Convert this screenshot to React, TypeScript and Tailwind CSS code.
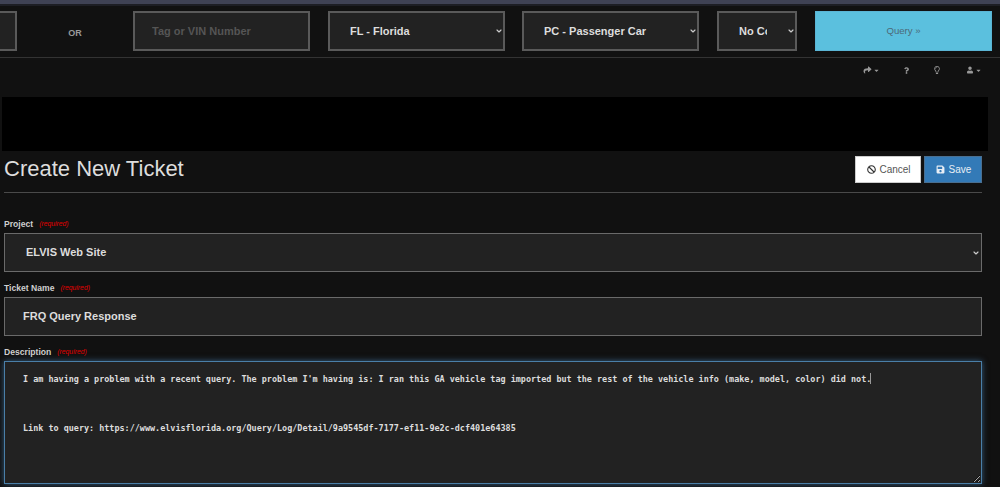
import React from "react";
import { FaShare, FaQuestion, FaRegLightbulb, FaUser, FaCaretDown, FaBan, FaSave } from "react-icons/fa";
import { LuChevronDown } from "react-icons/lu";

const sans = "[font-family:'Liberation_Sans',Arial,sans-serif]";
const fieldClasses =
  "h-10 bg-[#222222] border-2 border-[#5a5a5a] text-[#dddddd] text-[11px] font-bold outline-none [font-family:'Liberation_Sans',Arial,sans-serif]";

function Select({ value, className, pr = "pr-[6px]", pl = "pl-[20px]", tall = false }: { value: string; className: string; pr?: string; pl?: string; tall?: boolean }) {
  return (
    <div className={`relative ${className}`}>
      <select
        defaultValue={value}
        className={`block w-full appearance-none bg-[#222222] text-[#dddddd] text-[11px] font-bold outline-none ${tall ? "h-[39px] border border-[#6a6a6a]" : "h-10 border-2 border-[#5a5a5a]"} ${pl} ${pr} [font-family:'Liberation_Sans',Arial,sans-serif]`}
      >
        <option value={value}>{value}</option>
      </select>
      <LuChevronDown strokeWidth={3.5} className="absolute right-[2px] top-1/2 -translate-y-1/2 w-[8px] h-[8px] text-[#cccccc] pointer-events-none" />
    </div>
  );
}

function Label({ text }: { text: string }) {
  return (
    <div className="h-[13px] flex items-center gap-[6px] mb-[2px]">
      <span className="text-[8.6px] font-bold text-[#cfcfcf] leading-none">{text}</span>
      <span className="text-[6.8px] italic text-[#e00000] leading-none">(required)</span>
    </div>
  );
}

const desc = `I am having a problem with a recent query. The problem I'm having is: I ran this GA vehicle tag imported but the rest of the vehicle info (make, model, color) did not.



Link to query: https://www.elvisflorida.org/Query/Log/Detail/9a9545df-7177-ef11-9e2c-dcf401e64385`;

export default function App() {
  return (
    <div className={`h-[487px] w-[1000px] overflow-hidden bg-[#111111] ${sans}`}>
      <div className="h-[4px] bg-[#3f4254]" />
      <div className="h-[2px] bg-[#1d1e24]" />
      <header className="h-[52px] border-b border-[#333333] flex items-start pt-[5px] bg-[#111111]">
        <div className="h-10 w-[17px] bg-[#222222] border-2 border-l-0 border-[#5a5a5a]" />
        <div className="w-[116px] h-10 flex items-center justify-center pt-[5px] text-[9px] font-bold text-[#999999]">OR</div>
        <input readOnly placeholder="Tag or VIN Number" className={`${fieldClasses} w-[177px] pl-[17px] placeholder:text-[#555555]`} />
        <Select value="FL - Florida" className="w-[177px] ml-[18px]" />
        <Select value="PC - Passenger Car" className="w-[177px] ml-[17px]" />
        <Select value="No Color" className="w-[80px] ml-[18px]" pr="pr-[28px]" />
        <button className="ml-[18px] h-10 w-[177px] bg-[#5bc0de] border border-[#5bb5d5] text-[9.6px] text-[#4c6a78] flex items-center justify-center">Query »</button>
      </header>
      <div className="h-[39px] flex items-start justify-end pt-[6px] pr-[18px] text-[#999999]">
        <div className="flex items-center h-[12px]">
          <FaShare className="w-[9px] h-[8px]" />
          <FaCaretDown className="w-[7px] h-[7px] ml-[1px]" />
          <FaQuestion className="w-[5px] h-[7px] ml-[24px]" />
          <FaRegLightbulb className="w-[6px] h-[8px] ml-[25px]" />
          <FaUser className="w-[6px] h-[8px] ml-[27px]" />
          <FaCaretDown className="w-[7px] h-[7px] ml-[2px]" />
        </div>
      </div>
      <div className="h-[54px] ml-[2px] w-[986px] bg-black" />
      <main className="pl-[4px] w-[982px]">
        <div className="h-[42px] flex items-start justify-between border-b border-[#4a4a4a]">
          <h1 className="text-[22px] leading-[36px] text-[#dddddd]">Create New Ticket</h1>
          <div className="flex gap-[3px] pt-[5px]">
            <button className="h-[27px] w-[66px] bg-white border border-[#cccccc] text-[#555555] text-[10px] flex items-center justify-center gap-[3px] pl-[2px]">
              <FaBan className="w-[9px] h-[9px] text-[#333333]" /> Cancel
            </button>
            <button className="h-[27px] w-[58px] bg-[#337ab7] border border-[#4a6f90] text-[#e8eef5] text-[10px] flex items-center justify-center gap-[4px] pl-[1px]">
              <FaSave className="w-[9px] h-[9px]" /> Save
            </button>
          </div>
        </div>
        <div className="pt-[25px]">
          <Label text="Project" />
          <Select value="ELVIS Web Site" className="w-full" pl="pl-[21px]" tall />
        </div>
        <div className="pt-[10px]">
          <Label text="Ticket Name" />
          <input readOnly value="FRQ Query Response" className={`${fieldClasses} !h-[39px] w-full !border !border-[#6a6a6a] pl-[18px] pb-[2px]`} />
        </div>
        <div className="pt-[10px]">
          <Label text="Description" />
          <div className="relative">
            <textarea
              readOnly
              value={desc}
              className="block h-[123px] w-full bg-[#222222] border border-[#4a7fa8] shadow-[0_0_6px_rgba(82,150,210,0.55)] outline-none pl-[18px] pt-[11px] pr-[4px] text-[#dddddd] text-[8.45px] leading-[12.25px] font-bold [font-family:'DejaVu_Sans_Mono',monospace]"
            />
            <div className="absolute left-[866px] top-[12px] w-px h-[11px] bg-[#999999]" />
          </div>
        </div>
      </main>
    </div>
  );
}
